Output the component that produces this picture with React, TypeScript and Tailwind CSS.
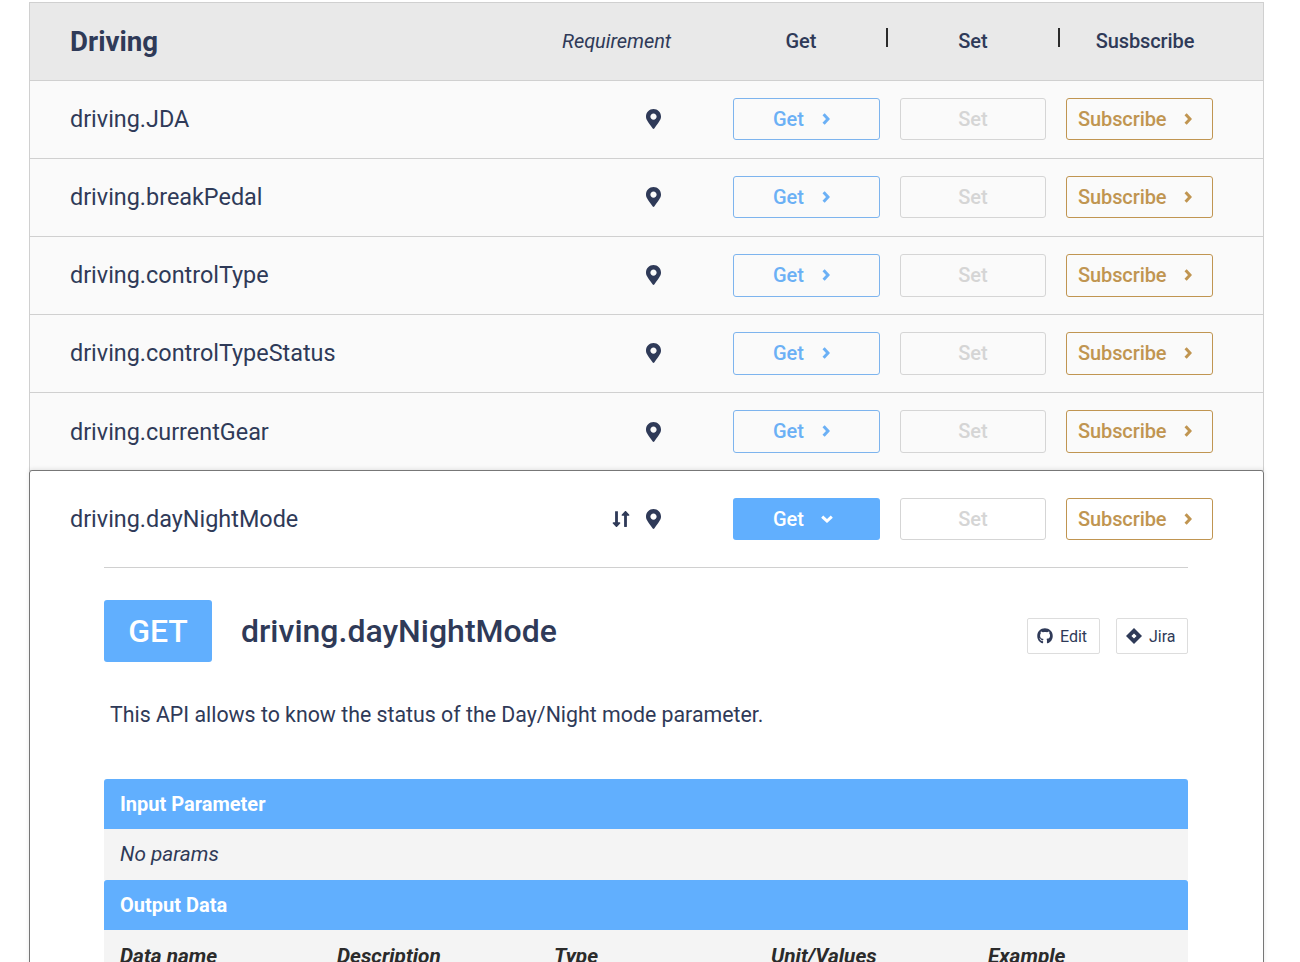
import React from "react";
import { FaMapMarkerAlt, FaGithub, FaLongArrowAltDown, FaLongArrowAltUp } from "react-icons/fa";

const rows = [
  { name: "driving.JDA", tall: false, low: false },
  { name: "driving.breakPedal", tall: false, low: false },
  { name: "driving.controlType", tall: true, low: false },
  { name: "driving.controlTypeStatus", tall: true, low: false },
  { name: "driving.currentGear", tall: true, low: true },
];

function ChevronRight({ className }: { className: string }) {
  return (
    <svg viewBox="0 0 8 12" className={className} fill="none" stroke="currentColor" strokeWidth="3">
      <path d="M1.6 1.2 6 6 1.6 10.8" />
    </svg>
  );
}

function ChevronDown({ className }: { className: string }) {
  return (
    <svg viewBox="0 0 12 8" className={className} fill="none" stroke="currentColor" strokeWidth="3">
      <path d="M1.2 1.6 6 6 10.8 1.6" />
    </svg>
  );
}

function Buttons({ open, tall }: { open?: boolean; tall?: boolean }) {
  const h = tall ? "h-[43px]" : "h-[42px]";
  return (
    <div className="flex gap-5">
      <div className={`${h} ${open
        ? "flex w-[147px] items-center rounded-[3px] bg-[#61affe] pl-10 text-[20px] font-medium text-white"
        : "flex w-[147px] items-center rounded-[3px] border border-[#7db4ee] pl-[39px] text-[20px] font-medium text-[#6bb0f5]"}`}>
        <span>Get</span>
        {open
          ? <ChevronDown className="ml-[17px] h-[8px] w-[12px]" />
          : <ChevronRight className="ml-[18px] h-[12px] w-[8px]" />}
      </div>
      <div className={`${h} flex w-[146px] items-center justify-center rounded-[3px] border border-[#d5d5d5] text-[20px] font-medium text-[#d5d5d5]`}>Set</div>
      <div className={`${h} flex w-[147px] items-center rounded-[3px] border border-[#c09551] pl-[11px] text-[20px] font-medium tracking-[-0.1px] text-[#c09551]`}>
        <span>Subscribe</span>
        <ChevronRight className="ml-[18px] h-[12px] w-[8px]" />
      </div>
    </div>
  );
}

function Row({ name, tall, low }: { name: string; tall: boolean; low: boolean }) {
  return (
    <div className="flex h-[78px] items-center border-b border-[#d0d0d0] bg-[#fafafa] pb-px pl-10 pr-[50px]">
      <div className={`flex-1 text-[23.4px] text-[#2f3a58] ${low ? "pt-[4px]" : "pt-[2px]"}`}>{name}</div>
      <FaMapMarkerAlt className={`mr-[72px] h-[20px] w-[15px] text-[#2f3a58] ${low ? "mt-[2px]" : ""}`} />
      <Buttons tall={tall} />
    </div>
  );
}

function Jira() {
  return (
    <svg viewBox="0 0 16 16" className="h-4 w-4" fill="#2f3a58" fillRule="evenodd">
      <path d="M8 0 16 8 8 16 0 8ZM8 5.4 5.4 8 8 10.6 10.6 8Z" />
    </svg>
  );
}

export default function App() {
  return (
    <div className="h-[962px] overflow-hidden bg-white pt-[2px] font-['Roboto',sans-serif] text-[#2f3a58]">
      <div className="mx-[29px] w-[1235px] border-x border-t border-[#d0d0d0]">
        <div className="flex h-[78px] items-center border-b border-[#d0d0d0] bg-[#e9e9e9] pl-10">
          <div className="flex-1 text-[27.7px] font-bold">Driving</div>
          <div className="mr-[44px] w-[109px] pb-[2px] text-[20px] italic tracking-[-0.05px]">Requirement</div>
          <div className="flex items-center">
            <div className="w-[171px] pb-[2px] pl-px text-center text-[20px] font-medium">Get</div>
            <div className="mb-2 h-[19px] w-[2px] bg-[#2b2b2b]" />
            <div className="w-[170px] pb-[2px] text-center text-[20px] font-medium">Set</div>
            <div className="mb-2 h-[19px] w-[2px] bg-[#2b2b2b]" />
            <div className="w-[170px] pb-[2px] text-center text-[20px] font-medium tracking-[-0.1px]">Susbscribe</div>
            <div className="w-[33px]" />
          </div>
        </div>
        {rows.map((r) => <Row key={r.name} name={r.name} tall={r.tall} low={r.low} />)}
      </div>
      <div className="mx-[29px] -mt-px w-[1235px] rounded-t-[3px] border border-[#777777] bg-white shadow-[0_-1px_4px_rgba(0,0,0,0.1)]">
        <div className="flex h-[96px] items-center pl-10 pr-[50px]">
          <div className="flex-1 pt-[2px] text-[23.4px]">driving.dayNightMode</div>
          <div className="mr-[16px] flex text-[#2f3a58]">
            <FaLongArrowAltDown className="h-[18px] w-[9px]" />
            <FaLongArrowAltUp className="h-[18px] w-[9px]" />
          </div>
          <FaMapMarkerAlt className="mr-[72px] h-[20px] w-[15px]" />
          <Buttons open />
        </div>
        <div className="ml-[74px] mr-[75px]">
          <div className="border-t border-[#d0d0d0]" />
          <div className="mt-8 flex items-center">
            <div className="flex h-[62px] w-[108px] items-center justify-center rounded-[3px] bg-[#61affe] text-[32px] font-medium text-white">GET</div>
            <div className="ml-[29px] flex-1 text-[32px] font-medium">driving.dayNightMode</div>
            <div className="mt-[10px] flex gap-4">
              <div className="flex h-9 w-[73px] items-center gap-[7px] rounded-[2px] border border-[#dddddd] pl-[9px] text-[16px]">
                <FaGithub className="h-4 w-4" />
                <span className="pt-px">Edit</span>
              </div>
              <div className="flex h-9 w-[72px] items-center gap-[7px] rounded-[2px] border border-[#dddddd] pl-[9px] text-[16px]">
                <Jira />
                <span className="pt-px">Jira</span>
              </div>
            </div>
          </div>
          <p className="ml-[6px] mt-[39px] text-[21.33px] leading-[28px]">This API allows to know the status of the Day/Night mode parameter.</p>
          <div className="mt-[50px] overflow-hidden rounded-t-[3px]">
            <div className="flex h-[50px] items-center bg-[#61affe] pl-4 text-[20px] font-bold text-white">Input Parameter</div>
            <div className="flex h-[51px] items-center bg-[#f4f4f4] pl-4 text-[20.8px] italic">No params</div>
            <div className="flex h-[50px] items-center rounded-t-[3px] bg-[#61affe] pl-4 text-[20px] font-bold text-white">Output Data</div>
            <div className="grid h-[60px] grid-cols-[217px_217px_217px_217px_1fr] items-start bg-[#f4f4f4] pl-4 pt-[11px] text-[20.8px] font-bold italic text-[#2b2b2b]">
              <div>Data name</div>
              <div>Description</div>
              <div>Type</div>
              <div>Unit/Values</div>
              <div>Example</div>
            </div>
          </div>
        </div>
      </div>
    </div>
  );
}
